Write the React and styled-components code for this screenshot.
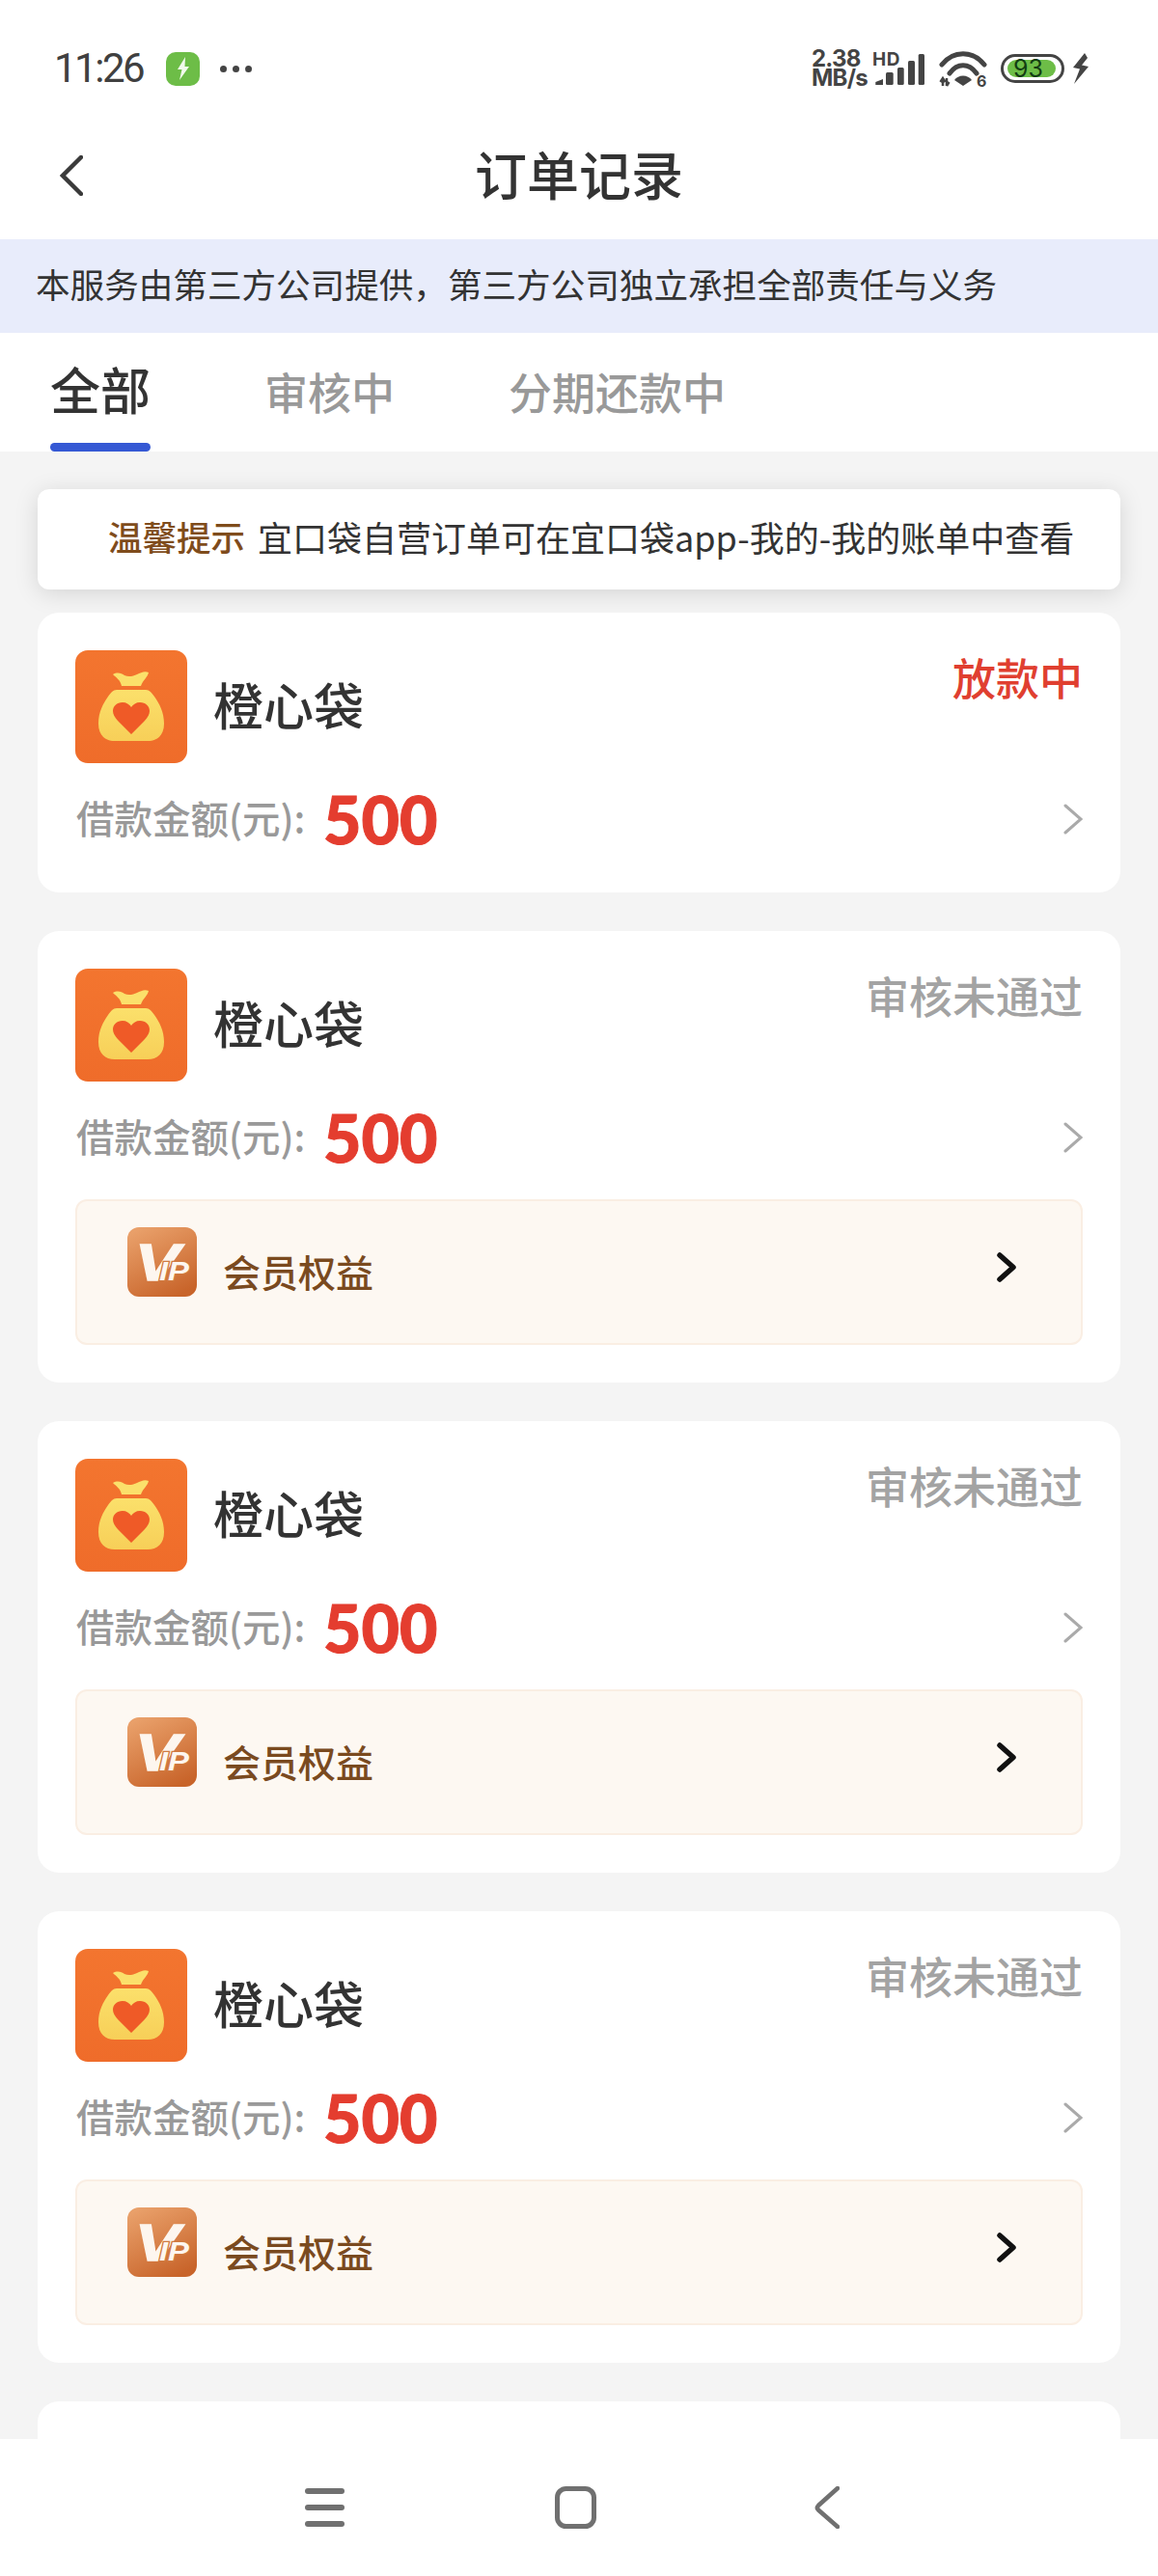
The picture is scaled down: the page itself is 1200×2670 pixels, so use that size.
import React from "react";
import styled, { createGlobalStyle } from "styled-components";

const Global = createGlobalStyle`
  html, body { margin: 0; padding: 0; background: #fff; }
  body { font-family: "Noto Sans CJK SC", "Noto Sans", sans-serif; color: #333; }
  * { box-sizing: border-box; }
`;

const Page = styled.div`
  width: 1200px;
  height: 2670px;
  display: flex;
  flex-direction: column;
  overflow: hidden;
  background: #fff;
`;

const StatusBar = styled.div`
  height: 114px;
  padding: 28px 71px 0 56px;
  display: flex;
  justify-content: space-between;
  align-items: flex-start;
`;
const StatusLeft = styled.div`
  height: 86px;
  display: flex;
  align-items: center;
`;
const Time = styled.span`
  font: 400 42px/1 Roboto, sans-serif;
  letter-spacing: -2.5px;
  color: #404040;
  width: 116px;
`;
const AppBadge = styled.span`
  width: 35px;
  height: 35px;
  border-radius: 10px;
  background: #6dbd47;
  display: flex;
  align-items: center;
  justify-content: center;
`;
const Dots = styled.span`
  margin-left: 21px;
  display: flex;
  gap: 6px;
  & > i {
    width: 7px;
    height: 7px;
    border-radius: 50%;
    background: #444;
  }
`;
const StatusRight = styled.div`
  height: 86px;
  display: flex;
  align-items: center;
`;
const Speed = styled.div`
  width: 55px;
  margin-right: 8px;
  font: 700 24px/20px Inter, sans-serif;
  letter-spacing: -0.8px;
  color: #444;
  white-space: nowrap;
`;
const Battery = styled.div`
  width: 66px;
  height: 30px;
  margin: 0 8px 0 14px;
  border: 3px solid #444;
  border-radius: 15px;
  padding: 3px 4px;
  display: flex;
`;
const BatteryFill = styled.div`
  width: 50px;
  border-radius: 9px;
  background: #6dbd47;
  padding-left: 6px;
  font: 400 25px/18px Inter, sans-serif;
  color: #123c12;
`;

const NavBar = styled.div`
  height: 134px;
  padding: 0 62px 2px;
  display: grid;
  grid-template-columns: 1fr auto 1fr;
  align-items: center;
`;
const BackIcon = styled.svg`
  margin-top: 3px;
`;
const Title = styled.h1`
  margin: 0;
  font-size: 54px;
  font-weight: 500;
  line-height: 1.2;
  color: #333;
`;

const Banner = styled.div`
  height: 97px;
  padding: 0 0 6px 37px;
  display: flex;
  align-items: center;
  background: #e8ecfb;
  font-size: 35.6px;
  color: #333;
  white-space: nowrap;
`;

const Tabs = styled.div`
  height: 123px;
  padding-left: 52px;
  display: flex;
  align-items: center;
  gap: 118px;
  background: #fff;
`;
const Tab = styled.div`
  position: relative;
  height: 100%;
  padding-bottom: ${(p) => (p.$active ? "8px" : "2px")};
  display: flex;
  align-items: center;
  justify-content: center;
  white-space: nowrap;
  font-size: ${(p) => (p.$active ? "52px" : "45px")};
  font-weight: 500;
  color: ${(p) => (p.$active ? "#333" : "#999")};
  ${(p) => p.$active && "width: 104px;"}
  ${(p) =>
    p.$active &&
    `&::after {
      content: "";
      position: absolute;
      left: 0;
      right: 0;
      bottom: 0;
      height: 9px;
      border-radius: 5px;
      background: #3558d4;
    }`}
`;

const List = styled.div`
  flex: 1;
  min-height: 0;
  overflow: hidden;
  padding: 39px 39px 0;
  background: #f4f4f4;
  display: flex;
  flex-direction: column;
`;
const Notice = styled.div`
  flex: none;
  height: 104px;
  margin-bottom: 24px;
  padding: 0 0 7px 73px;
  display: flex;
  align-items: center;
  gap: 13px;
  border-radius: 12px;
  background: #fff;
  box-shadow: 0 4px 24px rgba(0, 0, 0, 0.13);
  font-size: 36px;
  color: #333;
  white-space: nowrap;
`;
const NoticeLabel = styled.span`
  color: #7f4c1c;
  font-size: 35.5px;
  font-weight: 500;
`;

const Card = styled.div`
  flex: none;
  min-height: 120px;
  margin-bottom: 40px;
  padding: 39px;
  border-radius: 22px;
  background: #fff;
`;
const CardHead = styled.div`
  display: flex;
  align-items: flex-start;
`;
const AppName = styled.div`
  margin: 0 0 6px 27px;
  align-self: center;
  font-size: 52px;
  font-weight: 500;
  color: #333;
`;
const Status = styled.div`
  margin-left: auto;
  font-size: 45px;
  font-weight: 500;
  line-height: 56px;
  color: ${(p) => p.$color};
`;
const AmountRow = styled.div`
  height: 58px;
  margin-top: 29px;
  margin-bottom: 8px;
  display: flex;
  align-items: center;
`;
const AmountLabel = styled.span`
  width: 256px;
  margin: 0 0 6px 1px;
  font-size: 39.5px;
  font-weight: 500;
  color: #999;
  white-space: nowrap;
`;
const AmountValue = styled.span`
  font: 900 68px/1 Lato, sans-serif;
  -webkit-text-stroke: 1px #e43d2f;
  color: #e43d2f;
`;
const GrayChevron = styled.svg`
  margin-left: auto;
  width: 20px;
  height: 32px;
`;
const VipBox = styled.div`
  height: 151px;
  margin-top: 35px;
  padding: 27px 66px 0 52px;
  display: flex;
  align-items: flex-start;
  border: 2px solid #faeee3;
  border-radius: 12px;
  background: #fdf8f2;
`;
const VipLabel = styled.span`
  margin: 20px 0 0 27px;
  font-size: 39px;
  font-weight: 500;
  line-height: 50px;
  color: #7a4a1f;
`;
const VipChevron = styled.svg`
  margin: 26px 0 0 auto;
  width: 21px;
  height: 31px;
`;

const BottomNav = styled.div`
  flex: none;
  height: 142px;
  padding-left: 316px;
  display: flex;
  align-items: center;
  background: #fff;
`;
const NavIcon = styled.svg`
  flex: none;
  margin-right: ${(p) => p.$gap || 0}px;
`;

const BagIcon = () => (
  <svg width="116" height="117" viewBox="0 0 116 117" style={{ flex: "none" }}>
    <defs>
      <linearGradient id="bagBg" x1="0" y1="0" x2="0" y2="1">
        <stop offset="0" stopColor="#f3752f" />
        <stop offset="1" stopColor="#ef6c2a" />
      </linearGradient>
      <linearGradient id="bagFill" x1="0" y1="0" x2="0" y2="1">
        <stop offset="0" stopColor="#fbe06b" />
        <stop offset="1" stopColor="#f7cf58" />
      </linearGradient>
    </defs>
    <rect width="116" height="117" rx="13" fill="url(#bagBg)" />
    <path
      d="M39 25C44 22 48 24 51 26C55 28 60 27 64 25C68 23 72 21 76 23C75 28 70 31 68 37H48C47 31 42 28 39 25z"
      fill="#fbe06b"
    />
    <path
      d="M43 41h30c4 0 6 3 9 7 5 7 10 16 10 28 0 12-7 18-17 18H41c-10 0-17-6-17-18 0-12 5-21 10-28 3-4 5-7 9-7z"
      fill="url(#bagFill)"
    />
    <path
      d="M58 87 44 73c-3-3-5-7-5-10 0-5 4-9 10-9 4 0 7 2 9 5 2-3 5-5 9-5 6 0 10 4 10 9 0 3-2 7-5 10z"
      fill="#ef5a27"
    />
  </svg>
);

const VipIcon = () => (
  <svg width="72" height="72" viewBox="0 0 72 72" style={{ flex: "none" }}>
    <defs>
      <linearGradient id="vipBg" x1="0.2" y1="0" x2="0.7" y2="1">
        <stop offset="0" stopColor="#e9a06a" />
        <stop offset="1" stopColor="#c8642a" />
      </linearGradient>
    </defs>
    <rect width="72" height="72" rx="12" fill="url(#vipBg)" />
    <text
      x="8"
      y="55"
      fontFamily="Liberation Sans, sans-serif"
      fontWeight="700"
      fontStyle="italic"
      fontSize="54"
      textLength="46"
      lengthAdjust="spacingAndGlyphs"
      fill="#fdf6ef"
      stroke="#fdf6ef"
      strokeWidth="1.500"
    >
      V
    </text>
    <text
      x="33"
      y="55"
      fontFamily="Liberation Sans, sans-serif"
      fontWeight="700"
      fontStyle="italic"
      fontSize="28"
      textLength="31"
      lengthAdjust="spacingAndGlyphs"
      fill="#fdf6ef"
      stroke="#d07a40"
      strokeWidth="2.500"
      paintOrder="stroke"
    >
      IP
    </text>
  </svg>
);

const Chevron = () => (
  <GrayChevron viewBox="0 0 20 32" fill="none" stroke="#aaa" strokeWidth="3" strokeLinecap="round">
    <path d="M2 2l16 14L2 30" />
  </GrayChevron>
);

const OrderCard = ({ status, color, vip }) => (
  <Card>
    <CardHead>
      <BagIcon />
      <AppName>橙心袋</AppName>
      <Status $color={color}>{status}</Status>
    </CardHead>
    <AmountRow>
      <AmountLabel>借款金额(元):</AmountLabel>
      <AmountValue>500</AmountValue>
      <Chevron />
    </AmountRow>
    {vip && (
      <VipBox>
        <VipIcon />
        <VipLabel>会员权益</VipLabel>
        <VipChevron viewBox="0 0 21 31" fill="none" stroke="#111" strokeWidth="5.500" strokeLinecap="round" strokeLinejoin="round">
          <path d="M3 3l14 12.500L3 28" />
        </VipChevron>
      </VipBox>
    )}
  </Card>
);

export default function App() {
  return (
    <Page>
      <Global />
      <StatusBar>
        <StatusLeft>
          <Time>11:26</Time>
          <AppBadge>
            <svg width="14" height="24" viewBox="0 0 14 24">
              <path d="M9 0 1 13h4.500L3 24l10-14H8.500z" fill="#f2faec" />
            </svg>
          </AppBadge>
          <Dots>
            <i />
            <i />
            <i />
          </Dots>
        </StatusLeft>
        <StatusRight>
          <Speed>
            2.38
            <br />
            MB/s
          </Speed>
          <svg width="54" height="37" viewBox="0 0 54 37" style={{ marginRight: 15 }}>
            <text x="0" y="15" fontFamily="Inter, sans-serif" fontWeight="700" fontSize="19" letterSpacing="0.5" fill="#444">
              HD
            </text>
            <path d="M3.300 35v-3l7.700-3v6z" fill="#444" />
            <rect x="14" y="22" width="7.700" height="13" rx="1.500" fill="#444" />
            <rect x="26" y="17" width="6.700" height="18" rx="1.500" fill="#444" />
            <rect x="37" y="10" width="7" height="25" rx="1.500" fill="#444" />
            <rect x="47.700" y="3" width="6.300" height="32" rx="1.500" fill="#444" />
          </svg>
          <svg width="50" height="38" viewBox="0 0 50 38">
            <g fill="none" stroke="#444" strokeWidth="5" strokeLinecap="round">
              <path d="M3 15C15 0 35 0 47 15" />
              <path d="M11 24C19 13 31 13 39 24" />
            </g>
            <path d="M16 31c4-6 14-6 18 0l-9 6z" fill="#444" />
            <path d="M4 29v8M1.500 33 4 29l2.500 4M8 29v8M8 37l2.500-4" stroke="#444" strokeWidth="2.500" fill="none" />
            <text x="39" y="38" fontFamily="Inter, sans-serif" fontWeight="700" fontSize="16" fill="#444">
              6
            </text>
          </svg>
          <Battery>
            <BatteryFill>93</BatteryFill>
          </Battery>
          <svg width="18" height="32" viewBox="0 0 18 32">
            <path d="M13 0 1 15l7 1.500L2 32l15-18-7-1.500 6-7.500z" fill="#444" />
          </svg>
        </StatusRight>
      </StatusBar>

      <NavBar>
        <BackIcon width="24" height="42" viewBox="0 0 24 42" fill="none" stroke="#3a3a3a" strokeWidth="4.500" strokeLinecap="round">
          <path d="M22 2 3 21l19 19" />
        </BackIcon>
        <Title>订单记录</Title>
      </NavBar>

      <Banner>本服务由第三方公司提供，第三方公司独立承担全部责任与义务</Banner>

      <Tabs>
        <Tab $active>全部</Tab>
        <Tab>审核中</Tab>
        <Tab>分期还款中</Tab>
      </Tabs>

      <List>
        <Notice>
          <NoticeLabel>温馨提示</NoticeLabel>
          <span>宜口袋自营订单可在宜口袋app-我的-我的账单中查看</span>
        </Notice>
        <OrderCard status="放款中" color="#e03f30" />
        <OrderCard status="审核未通过" color="#a3a3a3" vip />
        <OrderCard status="审核未通过" color="#a3a3a3" vip />
        <OrderCard status="审核未通过" color="#a3a3a3" vip />
        <Card />
      </List>

      <BottomNav>
        <NavIcon $gap={218} width="41" height="40" viewBox="0 0 41 40" fill="#707070">
          <rect x="0" y="0" width="41" height="6" rx="3" />
          <rect x="0" y="17" width="41" height="6" rx="3" />
          <rect x="0" y="34" width="41" height="6" rx="3" />
        </NavIcon>
        <NavIcon $gap={226} width="43" height="44" viewBox="0 0 43 44" fill="none">
          <rect x="2.500" y="2.500" width="38" height="39" rx="9" stroke="#707070" strokeWidth="5" />
        </NavIcon>
        <NavIcon width="26" height="44" viewBox="0 0 26 44" fill="none">
          <path d="M24 2 4 20c-1.500 1.500-1.500 3 0 4.500L24 42" stroke="#707070" strokeWidth="4.500" strokeLinecap="round" />
        </NavIcon>
      </BottomNav>
    </Page>
  );
}
